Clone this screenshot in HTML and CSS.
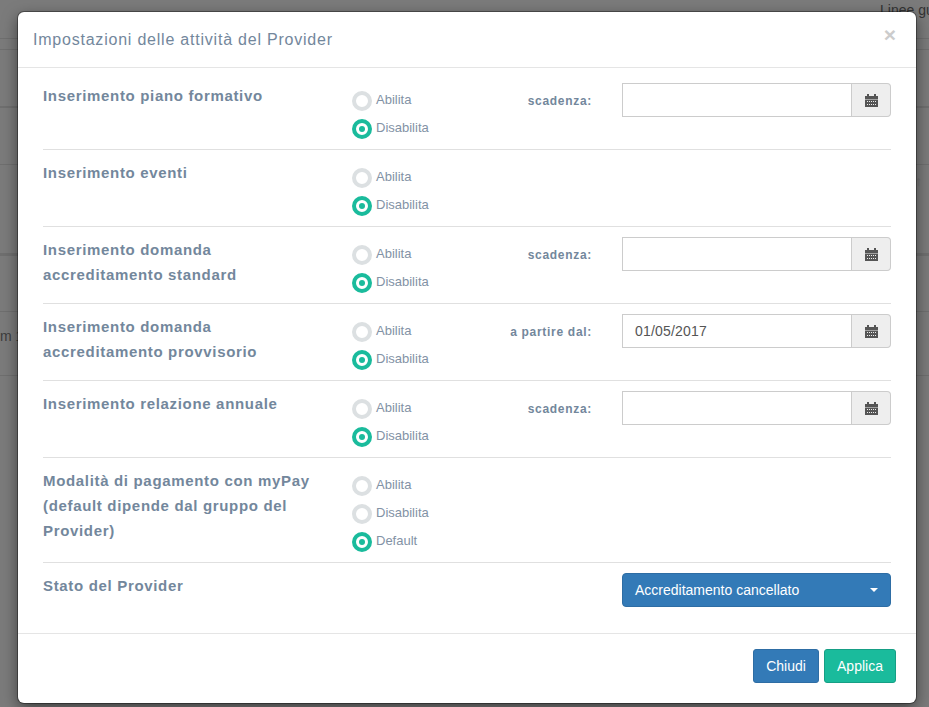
FILE: index.html
```html
<!DOCTYPE html>
<html lang="it">
<head>
<meta charset="utf-8">
<title>Impostazioni delle attività del Provider</title>
<link rel="stylesheet" href="styles.css">
</head>
<body>
<div class="backdrop">
  <span class="bg-text bg-linee">Linee guida</span>
  <span class="bg-text bg-m">m 1</span>
  <span class="bg-text bg-up">↑</span>
  <i class="bg-line l1"></i><i class="bg-line l2"></i><i class="bg-line l3"></i>
  <i class="bg-line l4"></i><i class="bg-line l5"></i><i class="bg-line l6"></i><i class="bg-line l7"></i>
</div>
<section class="modal">
  <header class="modal-header">
    <h4>Impostazioni delle attività del Provider</h4>
    <span class="close">×</span>
  </header>
  <div class="modal-body">
    <div class="row">
      <div class="name">Inserimento piano formativo</div>
      <div class="radios">
        <label class="radio"><span class="dot"></span>Abilita</label>
        <label class="radio on"><span class="dot"></span>Disabilita</label>
      </div>
      <div class="date-label">scadenza:</div>
      <div class="date"><span class="field"></span><span class="addon"><svg viewBox="0 0 13 13" width="13" height="13"><path d="M0 2h2V0h2v2h5V0h2v2h2v3H0z"/><path fill-rule="evenodd" d="M0 5.500h13V13H0zM2 7v1h1V7zm2 0v1h1V7zm2 0v1h1V7zm2 0v1h1V7zm2 0v1h1V7zM2 10v1h1v-1zm2 0v1h1v-1zm2 0v1h1v-1zm2 0v1h1v-1zm2 0v1h1v-1z"/></svg></span></div>
    </div>
    <div class="row">
      <div class="name">Inserimento eventi</div>
      <div class="radios">
        <label class="radio"><span class="dot"></span>Abilita</label>
        <label class="radio on"><span class="dot"></span>Disabilita</label>
      </div>
    </div>
    <div class="row">
      <div class="name">Inserimento domanda accreditamento standard</div>
      <div class="radios">
        <label class="radio"><span class="dot"></span>Abilita</label>
        <label class="radio on"><span class="dot"></span>Disabilita</label>
      </div>
      <div class="date-label">scadenza:</div>
      <div class="date"><span class="field"></span><span class="addon"><svg viewBox="0 0 13 13" width="13" height="13"><path d="M0 2h2V0h2v2h5V0h2v2h2v3H0z"/><path fill-rule="evenodd" d="M0 5.500h13V13H0zM2 7v1h1V7zm2 0v1h1V7zm2 0v1h1V7zm2 0v1h1V7zm2 0v1h1V7zM2 10v1h1v-1zm2 0v1h1v-1zm2 0v1h1v-1zm2 0v1h1v-1zm2 0v1h1v-1z"/></svg></span></div>
    </div>
    <div class="row">
      <div class="name">Inserimento domanda accreditamento provvisorio</div>
      <div class="radios">
        <label class="radio"><span class="dot"></span>Abilita</label>
        <label class="radio on"><span class="dot"></span>Disabilita</label>
      </div>
      <div class="date-label">a partire dal:</div>
      <div class="date"><span class="field">01/05/2017</span><span class="addon"><svg viewBox="0 0 13 13" width="13" height="13"><path d="M0 2h2V0h2v2h5V0h2v2h2v3H0z"/><path fill-rule="evenodd" d="M0 5.500h13V13H0zM2 7v1h1V7zm2 0v1h1V7zm2 0v1h1V7zm2 0v1h1V7zm2 0v1h1V7zM2 10v1h1v-1zm2 0v1h1v-1zm2 0v1h1v-1zm2 0v1h1v-1zm2 0v1h1v-1z"/></svg></span></div>
    </div>
    <div class="row">
      <div class="name">Inserimento relazione annuale</div>
      <div class="radios">
        <label class="radio"><span class="dot"></span>Abilita</label>
        <label class="radio on"><span class="dot"></span>Disabilita</label>
      </div>
      <div class="date-label">scadenza:</div>
      <div class="date"><span class="field"></span><span class="addon"><svg viewBox="0 0 13 13" width="13" height="13"><path d="M0 2h2V0h2v2h5V0h2v2h2v3H0z"/><path fill-rule="evenodd" d="M0 5.500h13V13H0zM2 7v1h1V7zm2 0v1h1V7zm2 0v1h1V7zm2 0v1h1V7zm2 0v1h1V7zM2 10v1h1v-1zm2 0v1h1v-1zm2 0v1h1v-1zm2 0v1h1v-1zm2 0v1h1v-1z"/></svg></span></div>
    </div>
    <div class="row">
      <div class="name">Modalità di pagamento con myPay (default dipende dal gruppo del Provider)</div>
      <div class="radios">
        <label class="radio"><span class="dot"></span>Abilita</label>
        <label class="radio"><span class="dot"></span>Disabilita</label>
        <label class="radio on"><span class="dot"></span>Default</label>
      </div>
    </div>
    <div class="row last">
      <div class="name">Stato del Provider</div>
      <div class="select"><span>Accreditamento cancellato</span><span class="caret"></span></div>
    </div>
  </div>
  <footer class="modal-footer">
    <button class="btn blue">Chiudi</button>
    <button class="btn green">Applica</button>
  </footer>
</section>
</body>
</html>
```
FILE: styles.css
```css
* { box-sizing: border-box; }
html, body { margin: 0; height: 100%; }
body {
  background: #7b7b7b;
  font-family: "Liberation Sans", Arial, sans-serif;
  color: #73879c;
  overflow: hidden;
}
.backdrop { position: absolute; inset: 0; overflow: hidden; }
.bg-text { position: absolute; font-size: 14px; color: #333; white-space: nowrap; }
.bg-linee { left: 880px; top: 2px; }
.bg-m { left: 0; top: 328px; color: #3d3d3d; }
.bg-up { left: 915px; top: 173px; color: #6f6f6f; }
.bg-line { position: absolute; left: 0; right: 0; height: 1px; background: #6f6f6f; }
.l1 { top: 38px; } .l2 { top: 49px; } .l3 { top: 106px; height: 2px; }
.l4 { top: 164px; } .l5 { top: 253px; height: 3px; } .l6 { top: 311px; } .l7 { top: 375px; }
.modal {
  position: absolute;
  left: 18px; top: 12px;
  width: 898px; height: 691px;
  background: #fff;
  border-radius: 6px;
  box-shadow: 0 0 0 1px rgba(0,0,0,.35), 0 5px 15px rgba(0,0,0,.5);
  display: flex;
  flex-direction: column;
}
.modal-header {
  height: 56px;
  flex: none;
  padding: 0 15px;
  border-bottom: 1px solid #e5e5e5;
  display: flex;
  justify-content: space-between;
}
.modal-header h4 { margin: 0; font-size: 16px; font-weight: 400; line-height: 55px; letter-spacing: .78px; }
.close { font-size: 21px; font-weight: 700; color: #ccc; line-height: 46px; margin-right: 5px; }
.modal-body { flex: 1; min-height: 0; padding: 5px 25px 0; }
.row {
  display: grid;
  grid-template-columns: 309px 148px 122px 269px;
  border-bottom: 1px solid #e0e0e0;
  padding: 10px 0 2px;
  min-height: 77px;
  align-items: start;
}
.row.last { border-bottom: 0; min-height: 0; padding-bottom: 0; }
.name {
  font-size: 15px;
  font-weight: 700;
  line-height: 25px;
  letter-spacing: .67px;
  padding-right: 20px;
}
.radios { display: flex; flex-direction: column; padding-top: 8px; }
.radio { display: flex; align-items: flex-start; height: 28px; font-size: 13px; line-height: 14px; padding-top: 2px; color: #8292a5; }
.dot {
  width: 20px; height: 20px;
  border-radius: 50%;
  border: 4px solid #dce0e2;
  margin: -2px 4px 0 0;
  flex: none;
  background: #fff;
}
.on .dot { border-color: #1abb9c; position: relative; }
.on .dot::after {
  content: "";
  position: absolute;
  left: 3px; top: 3px;
  width: 6px; height: 6px;
  border-radius: 50%;
  background: #1abb9c;
}
.date-label {
  font-size: 12px;
  font-weight: 700;
  letter-spacing: .7px;
  text-align: right;
  line-height: 14px;
  padding: 11px 30px 0 0;
  white-space: nowrap;
}
.date {
  display: flex;
  width: 269px;
  height: 34px;
  grid-column: 4;
}
.field {
  flex: 1;
  border: 1px solid #ccc;
  color: #555;
  font-size: 14px;
  letter-spacing: .2px;
  line-height: 32px;
  padding: 0 12px;
}
.addon {
  width: 39px;
  background: #eee;
  border: 1px solid #ccc;
  border-left: 0;
  border-radius: 0 4px 4px 0;
  display: flex; align-items: center; justify-content: center;
}
.addon svg { fill: #555; display: block; }
.select {
  grid-column: 4;
  width: 269px; height: 34px;
  background: #337ab7;
  border: 1px solid #2e6da4;
  border-radius: 4px;
  color: #fff;
  font-size: 14px;
  display: flex; align-items: center; justify-content: space-between;
  padding: 0 12px;
}
.caret { border-top: 4px solid #fff; border-left: 4px solid transparent; border-right: 4px solid transparent; }
.modal-footer {
  height: 70px;
  flex: none;
  border-top: 1px solid #e5e5e5;
  padding: 15px 20px 0;
  display: flex; justify-content: flex-end; gap: 5px;
}
.btn {
  height: 34px;
  padding: 0 12px;
  font: 14px "Liberation Sans", Arial, sans-serif;
  color: #fff;
  border-radius: 3px;
  border: 1px solid;
}
.blue { background: #337ab7; border-color: #2e6da4; width: 66px; }
.green { background: #1abb9c; border-color: #169f85; width: 72px; }
```
